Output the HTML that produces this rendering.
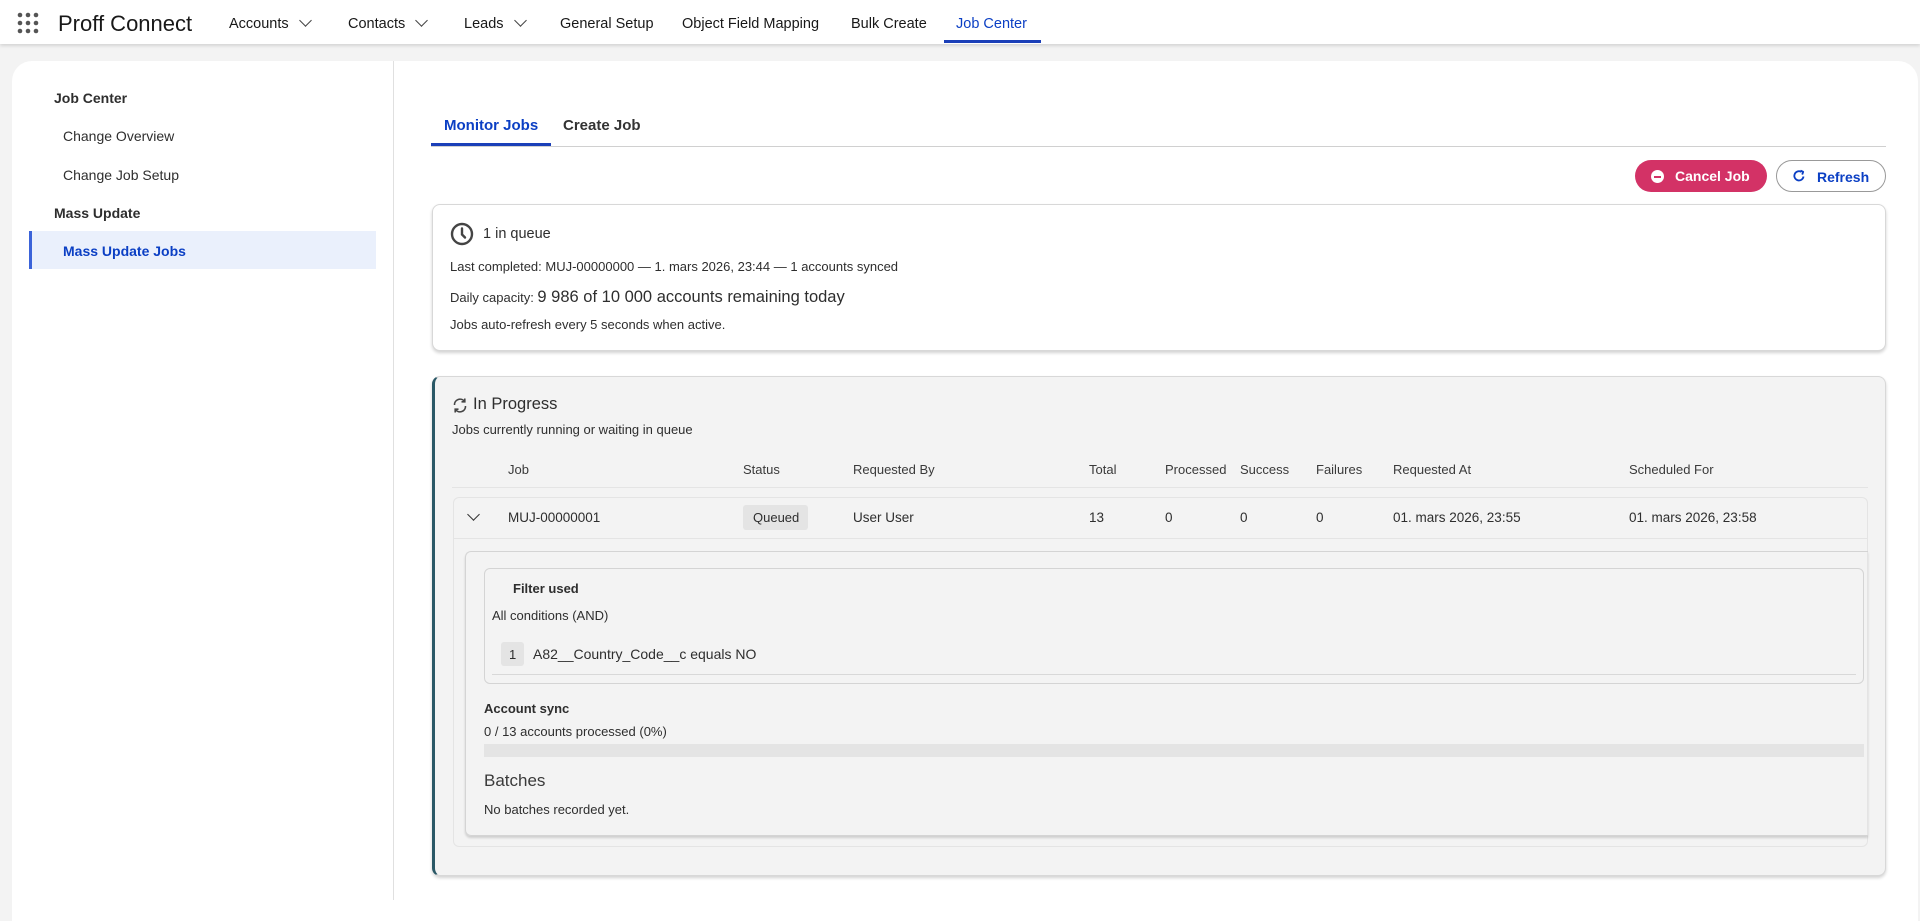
<!DOCTYPE html>
<html><head><meta charset="utf-8">
<style>
*{box-sizing:border-box;margin:0;padding:0}
body{width:1920px;height:900px;overflow:hidden;background:#f3f3f3;font-family:"Liberation Sans",Arial,sans-serif;color:#181818;position:relative}
.a{position:absolute;white-space:nowrap}
.hdr{position:absolute;left:0;top:0;width:1920px;height:44px;background:#fff;box-shadow:0 2px 3px rgba(0,0,0,.12)}
.nav{font-size:14.5px;top:16px;color:#181818}
.chev{display:inline-block;width:9px;height:9px;border-right:1.5px solid #444;border-bottom:1.5px solid #444;transform:rotate(45deg);margin-left:12px;position:relative;top:-3px}
.main{position:absolute;left:12px;top:61px;width:1906px;height:860px;background:#fff;border-radius:20px 20px 0 0}
.s{font-size:14px;color:#2e2e2e}
.card{position:absolute;border-radius:8px;border:1px solid #d8d8d8;box-shadow:0 2px 3px rgba(0,0,0,.18)}
.sm{font-size:13px;color:#2e2e2e}
.th{font-size:13px;color:#3a3a3a;top:462px}
.td{font-size:13.5px;color:#2e2e2e;top:510px}
</style></head><body>
<div class="hdr"></div>
<svg class="a" style="left:17px;top:12px" width="22" height="22" viewBox="0 0 22 22" fill="#555"><circle cx="3" cy="3" r="2.3"/><circle cx="11" cy="3" r="2.3"/><circle cx="19" cy="3" r="2.3"/><circle cx="3" cy="11" r="2.3"/><circle cx="11" cy="11" r="2.3"/><circle cx="19" cy="11" r="2.3"/><circle cx="3" cy="19" r="2.3"/><circle cx="11" cy="19" r="2.3"/><circle cx="19" cy="19" r="2.3"/></svg>
<div class="a" style="left:58px;top:11px;font-size:22px;color:#181818">Proff Connect</div>
<div class="a nav" style="left:229px">Accounts<span class="chev"></span></div>
<div class="a nav" style="left:348px">Contacts<span class="chev"></span></div>
<div class="a nav" style="left:464px">Leads<span class="chev"></span></div>
<div class="a nav" style="left:560px">General Setup</div>
<div class="a nav" style="left:682px">Object Field Mapping</div>
<div class="a nav" style="left:851px">Bulk Create</div>
<div class="a nav" style="left:956px;color:#0b3fc4">Job Center</div>
<div class="a" style="left:944px;top:40px;width:97px;height:3px;background:#1b3fb8"></div>

<div class="main"></div>
<div class="a" style="left:393px;top:61px;width:1px;height:839px;background:#e0e0e0"></div>
<div class="a s" style="left:54px;top:90px;font-weight:bold">Job Center</div>
<div class="a s" style="left:63px;top:128px">Change Overview</div>
<div class="a s" style="left:63px;top:167px">Change Job Setup</div>
<div class="a s" style="left:54px;top:205px;font-weight:bold">Mass Update</div>
<div class="a" style="left:29px;top:231px;width:347px;height:38px;background:#eaf0fc;border-left:3px solid #3b63d9"></div>
<div class="a s" style="left:63px;top:243px;font-weight:bold;color:#0b3fc4">Mass Update Jobs</div>

<div class="a" style="left:431px;top:146px;width:1455px;height:1px;background:#d0d0d0"></div>
<div class="a" style="left:431px;top:143px;width:120px;height:3px;background:#1b3fb8"></div>
<div class="a" style="left:444px;top:117px;font-size:15px;color:#0b3fc4;font-weight:bold">Monitor Jobs</div>
<div class="a" style="left:563px;top:117px;font-size:15px;color:#333;font-weight:bold">Create Job</div>

<div class="a" style="left:1635px;top:160px;width:132px;height:32px;border-radius:16px;background:#d33266;color:#fff;font-size:14px;font-weight:bold;padding:8px 0 0 40px">Cancel Job</div>
<div class="a" style="left:1651px;top:170px;width:13px;height:13px;border-radius:50%;background:#fff"></div>
<div class="a" style="left:1654px;top:175.5px;width:7px;height:2px;background:#d33266"></div>
<div class="a" style="left:1776px;top:160px;width:110px;height:32px;border-radius:16px;border:1px solid #999;background:#fff;color:#0b3fc4;font-size:14px;font-weight:bold;padding:8px 0 0 40px">Refresh</div>
<svg class="a" style="left:1792px;top:169px" width="14" height="14" viewBox="0 0 14 14" fill="none" stroke="#0b3fc4" stroke-width="1.8"><path d="M11.5 7.5A4.6 4.6 0 1 1 9.5 3"/><path d="M8.5 1.5l2.7 1.3-1 2.8" stroke-linejoin="round"/></svg>

<div class="card" style="left:432px;top:204px;width:1454px;height:147px;background:#fff"></div>
<svg class="a" style="left:450px;top:222px" width="24" height="24" viewBox="0 0 24 24" fill="none" stroke="#444" stroke-width="2.4"><circle cx="12" cy="12" r="10"/><path d="M12 6.5v6l3 3" stroke-linecap="round"/></svg>
<div class="a" style="left:483px;top:226px;font-size:14.5px;color:#2e2e2e">1 in queue</div>
<div class="a sm" style="left:450px;top:259px">Last completed: MUJ-00000000 — 1. mars 2026, 23:44 — 1 accounts synced</div>
<div class="a sm" style="left:450px;top:288px">Daily capacity: <span style="font-size:16.5px">9 986 of 10 000 accounts remaining today</span></div>
<div class="a sm" style="left:450px;top:317px">Jobs auto-refresh every 5 seconds when active.</div>

<div class="card" style="left:432px;top:376px;width:1454px;height:500px;background:#f3f3f3;border-left:3px solid #2a5866"></div>
<svg class="a" style="left:452px;top:397px" width="16" height="17" viewBox="0 0 16 17" fill="none" stroke="#444" stroke-width="1.6"><path d="M2.5 8A5.5 5.5 0 0 1 12.5 4.5"/><path d="M13.5 9A5.5 5.5 0 0 1 3.5 12.5"/><path d="M12.8 1.5v3.3H9.5M3.2 15.5v-3.3h3.3"/></svg>
<div class="a" style="left:473px;top:395px;font-size:16.5px;color:#2e2e2e">In Progress</div>
<div class="a sm" style="left:452px;top:422px">Jobs currently running or waiting in queue</div>
<div class="a th" style="left:508px">Job</div>
<div class="a th" style="left:743px">Status</div>
<div class="a th" style="left:853px">Requested By</div>
<div class="a th" style="left:1089px">Total</div>
<div class="a th" style="left:1165px">Processed</div>
<div class="a th" style="left:1240px">Success</div>
<div class="a th" style="left:1316px">Failures</div>
<div class="a th" style="left:1393px">Requested At</div>
<div class="a th" style="left:1629px">Scheduled For</div>
<div class="a" style="left:452px;top:487px;width:1416px;height:1px;background:#e4e4e4"></div>
<div class="a" style="left:453px;top:497px;width:1415px;height:350px;border:1px solid #e4e4e4;border-radius:6px"></div>
<div class="a" style="left:453px;top:538px;width:1415px;height:1px;background:#e4e4e4"></div>
<div class="a" style="left:469px;top:510px;width:9px;height:9px;border-right:1.6px solid #333;border-bottom:1.6px solid #333;transform:rotate(45deg)"></div>
<div class="a td" style="left:508px">MUJ-00000001</div>
<div class="a" style="left:743px;top:505px;width:65px;height:25px;background:#e4e4e4;border-radius:3px"></div>
<div class="a td" style="left:753px;font-size:13px;top:510px">Queued</div>
<div class="a td" style="left:853px">User User</div>
<div class="a td" style="left:1089px">13</div>
<div class="a td" style="left:1165px">0</div>
<div class="a td" style="left:1240px">0</div>
<div class="a td" style="left:1316px">0</div>
<div class="a td" style="left:1393px">01. mars 2026, 23:55</div>
<div class="a td" style="left:1629px">01. mars 2026, 23:58</div>

<div class="a" style="left:465px;top:551px;width:1403px;height:285px;border:1px solid #d4d4d4;border-right:none;border-radius:6px 0 0 6px;box-shadow:0 2px 2px rgba(0,0,0,.15)"></div>
<div class="a" style="left:484px;top:568px;width:1380px;height:116px;border:1px solid #d4d4d4;border-radius:6px"></div>
<div class="a sm" style="left:513px;top:581px;font-weight:bold">Filter used</div>
<div class="a sm" style="left:492px;top:608px">All conditions (AND)</div>
<div class="a" style="left:501px;top:642px;width:23px;height:24px;background:#e4e4e4;border-radius:3px"></div>
<div class="a sm" style="left:509px;top:647px">1</div>
<div class="a" style="left:533px;top:646px;font-size:14px;color:#2e2e2e">A82__Country_Code__c equals NO</div>
<div class="a" style="left:492px;top:674px;width:1364px;height:1px;background:#d8d8d8"></div>
<div class="a sm" style="left:484px;top:701px;font-weight:bold">Account sync</div>
<div class="a sm" style="left:484px;top:724px">0 / 13 accounts processed (0%)</div>
<div class="a" style="left:484px;top:744px;width:1380px;height:13px;background:#e4e4e4"></div>
<div class="a" style="left:484px;top:771px;font-size:17px;color:#3a3a3a">Batches</div>
<div class="a sm" style="left:484px;top:802px">No batches recorded yet.</div>
</body></html>
